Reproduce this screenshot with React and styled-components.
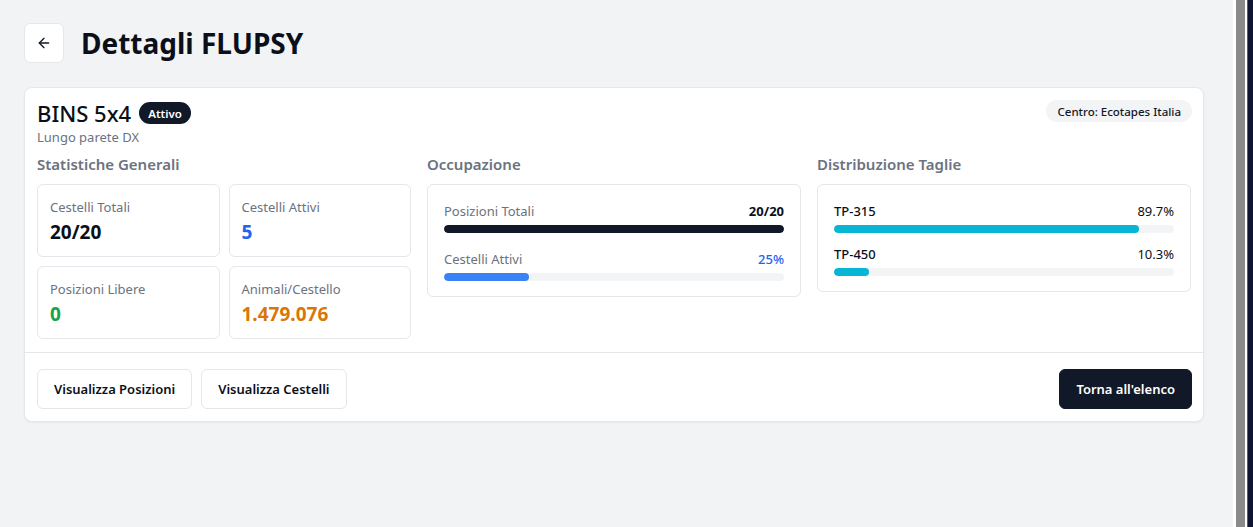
import React from 'react'
import styled, { createGlobalStyle } from 'styled-components'
import { ArrowLeft } from 'lucide-react'

const GlobalStyle = createGlobalStyle`
    * { box-sizing: border-box; }
    body {
        margin: 0;
        font-family: "Noto Sans", "Open Sans", Arial, sans-serif;
        color: #0f172a;
        background: #f3f4f6;
    }
`;

const Shell = styled.div`
    display: flex;
    height: 100vh;
    overflow: hidden;
`;

const Main = styled.main`
    flex: 1;
    background: #f2f3f5;
    padding: 23px 29px 24px 24px;
`;

const Rail = styled.div`
    width: 20px;
    display: flex;
    background: #fff;
    padding-left: 3px;
`;

const RailBar = styled.div`
    width: 9px;
    background: #8a8a8a;
`;

const RailEdge = styled.div`
    width: 6px;
    margin-left: 2px;
    background: #0f1530;
    border-left: 1px solid #4a52c8;
`;

const Header = styled.div`
    display: flex;
    align-items: center;
    gap: 17px;
    margin-bottom: 24px;
`;

const BackButton = styled.button`
    width: 40px;
    height: 40px;
    display: flex;
    align-items: center;
    justify-content: center;
    background: #fff;
    border: 1px solid #e5e7eb;
    border-radius: 6px;
    color: #111827;
    padding: 0;
    cursor: pointer;
`;

const Title = styled.h1`
    margin: 0;
    font-size: 28px;
    font-weight: 700;
    color: #0b0f19;
    line-height: 40px;
`;

const Card = styled.section`
    background: #fff;
    border: 1px solid #e5e7eb;
    border-radius: 8px;
    box-shadow: 0 1px 2px rgba(0, 0, 0, 0.05);
`;

const CardHeader = styled.div`
    display: flex;
    justify-content: space-between;
    align-items: flex-start;
    padding: 12px 11px 0 12px;
`;

const NameRow = styled.div`
    display: flex;
    align-items: center;
    gap: 8px;
    height: 26px;
`;

const Name = styled.h2`
    margin: 0;
    font-size: 22px;
    font-weight: 500;
    line-height: 26px;
    color: #0b0f19;
`;

const Pill = styled.span`
    display: inline-flex;
    align-items: center;
    height: 22px;
    padding: 0 ${p => p.$dark ? '9px' : '11px'};
    border-radius: 999px;
    font-size: 11.5px;
    font-weight: ${p => p.$dark ? 600 : 500};
    background: ${p => p.$dark ? '#111827' : '#f3f4f6'};
    color: ${p => p.$dark ? '#fff' : '#111827'};
`;

const Subtitle = styled.div`
    margin-top: 2px;
    font-size: 13px;
    line-height: 18px;
    color: #6b7280;
`;

const Body = styled.div`
    display: grid;
    grid-template-columns: repeat(3, 1fr);
    gap: 16px;
    padding: 7px 12px 13px;
    border-bottom: 1px solid #e5e7eb;
`;

const SectionTitle = styled.h3`
    margin: 0 0 9px;
    font-size: 15px;
    font-weight: 600;
    line-height: 22px;
    color: #6b7280;
`;

const StatGrid = styled.div`
    display: grid;
    grid-template-columns: 1fr 1fr;
    gap: 9px;
`;

const StatBox = styled.div`
    border: 1px solid #e5e7eb;
    border-radius: 6px;
    padding: 12px 12px 11px;
    height: 73px;
`;

const StatLabel = styled.div`
    font-size: 13px;
    line-height: 20px;
    color: #6b7280;
`;

const StatValue = styled.div`
    font-size: 19px;
    font-weight: 700;
    line-height: 30px;
    color: ${p => p.$color || '#0b0f19'};
`;

const Panel = styled.div`
    border: 1px solid #e5e7eb;
    border-radius: 6px;
    padding: 16px 16px 15px;
    display: flex;
    flex-direction: column;
    gap: ${p => p.$gap}px;
`;

const BarRow = styled.div`
    display: flex;
    justify-content: space-between;
    font-size: 13px;
    line-height: 20px;
    margin-bottom: 4px;
`;

const BarLabel = styled.span`
    color: ${p => p.$strong ? '#0b0f19' : '#6b7280'};
    font-weight: ${p => p.$strong ? 500 : 400};
`;

const BarValue = styled.span`
    color: ${p => p.$color || '#0b0f19'};
    font-weight: ${p => p.$weight || 400};
`;

const Track = styled.div`
    height: 8px;
    border-radius: 999px;
    background: #f3f4f6;
    overflow: hidden;
`;

const Fill = styled.div`
    height: 100%;
    border-radius: 999px;
    background: ${p => p.$color};
`;

const Footer = styled.div`
    display: flex;
    align-items: center;
    padding: 16px 11px 12px 12px;
    gap: 9px;
`;

const Button = styled.button`
    height: 40px;
    padding: 0 16px;
    border-radius: 6px;
    font-family: inherit;
    font-size: 13px;
    font-weight: 600;
    cursor: pointer;
    border: 1px solid ${p => p.$primary ? '#111827' : '#e5e7eb'};
    background: ${p => p.$primary ? '#111827' : '#fff'};
    color: ${p => p.$primary ? '#fff' : '#0b0f19'};
    margin-left: ${p => p.$push ? 'auto' : '0'};
`;

const stats = [
    { label: 'Cestelli Totali', value: '20/20' },
    { label: 'Cestelli Attivi', value: '5', color: '#2563eb' },
    { label: 'Posizioni Libere', value: '0', color: '#16a34a' },
    { label: 'Animali/Cestello', value: '1.479.076', color: '#d97706' },
]

const sizes = [
    { label: 'TP-315', pct: 89.7 },
    { label: 'TP-450', pct: 10.3 },
]

const Bar = ({ pct, color }) => (
    <Track>
        <Fill $color={color} style={{ width: `${pct}%` }} />
    </Track>
)

const App = () => {
    return (
        <>
        <GlobalStyle />
        <Shell>
            <Main>
                <Header>
                    <BackButton aria-label="Indietro">
                        <ArrowLeft size={16} strokeWidth={2} />
                    </BackButton>
                    <Title>Dettagli FLUPSY</Title>
                </Header>
                <Card>
                    <CardHeader>
                        <div>
                            <NameRow>
                                <Name>BINS 5x4</Name>
                                <Pill $dark>Attivo</Pill>
                            </NameRow>
                            <Subtitle>Lungo parete DX</Subtitle>
                        </div>
                        <Pill>Centro: Ecotapes Italia</Pill>
                    </CardHeader>
                    <Body>
                        <div>
                            <SectionTitle>Statistiche Generali</SectionTitle>
                            <StatGrid>
                                {stats.map(s => (
                                    <StatBox key={s.label}>
                                        <StatLabel>{s.label}</StatLabel>
                                        <StatValue $color={s.color}>{s.value}</StatValue>
                                    </StatBox>
                                ))}
                            </StatGrid>
                        </div>
                        <div>
                            <SectionTitle>Occupazione</SectionTitle>
                            <Panel $gap={16}>
                                <div>
                                    <BarRow>
                                        <BarLabel>Posizioni Totali</BarLabel>
                                        <BarValue $weight={700}>20/20</BarValue>
                                    </BarRow>
                                    <Bar pct={100} color="#111827" />
                                </div>
                                <div>
                                    <BarRow>
                                        <BarLabel>Cestelli Attivi</BarLabel>
                                        <BarValue $color="#2563eb" $weight={500}>25%</BarValue>
                                    </BarRow>
                                    <Bar pct={25} color="#3b82f6" />
                                </div>
                            </Panel>
                        </div>
                        <div>
                            <SectionTitle>Distribuzione Taglie</SectionTitle>
                            <Panel $gap={11}>
                                {sizes.map(s => (
                                    <div key={s.label}>
                                        <BarRow>
                                            <BarLabel $strong>{s.label}</BarLabel>
                                            <BarValue>{s.pct}%</BarValue>
                                        </BarRow>
                                        <Bar pct={s.pct} color="#06b6d4" />
                                    </div>
                                ))}
                            </Panel>
                        </div>
                    </Body>
                    <Footer>
                        <Button>Visualizza Posizioni</Button>
                        <Button>Visualizza Cestelli</Button>
                        <Button $primary $push>Torna all'elenco</Button>
                    </Footer>
                </Card>
            </Main>
            <Rail>
                <RailBar />
                <RailEdge />
            </Rail>
        </Shell>
        </>
    )
}

export default App
